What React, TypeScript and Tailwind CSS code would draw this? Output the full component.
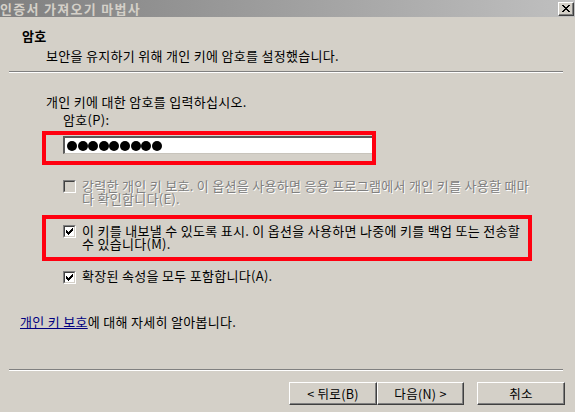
import React from 'react';
import clsx from 'clsx';

const font = { fontFamily: '"Noto Sans CJK KR", "Noto Sans", sans-serif' };

interface CheckProps {
  checked?: boolean;
  disabled?: boolean;
}

const Check: React.FC<CheckProps> = ({ checked, disabled }) => (
  <div className="w-[13px] h-[13px] shrink-0 border border-t-[#808080] border-l-[#808080] border-r-white border-b-white">
    <div
      className={clsx(
        'w-full h-full flex items-center justify-center border border-t-[#404040] border-l-[#404040] border-r-[#d4d0c8] border-b-[#d4d0c8]',
        disabled ? 'bg-[#d4d0c8]' : 'bg-white'
      )}
    >
      {checked && (
        <svg width="7" height="7" viewBox="0 0 7 7" shapeRendering="crispEdges">
          <path d="M6 0h1v3h-1z M5 1h1v3h-1z M4 2h1v3h-1z M3 3h1v3h-1z M2 4h1v3h-1z M1 3h1v3h-1z M0 2h1v3h-1z" fill="#000" />
        </svg>
      )}
    </div>
  </div>
);

const Button: React.FC<{ label: string; width: string }> = ({ label, width }) => (
  <div
    className={clsx(
      'h-[23px] flex items-center justify-center text-[12.5px] leading-[12px] tracking-[0.3px] text-black border border-t-white border-l-white border-r-[#404040] border-b-[#404040] shadow-[inset_-1px_-1px_0_#808080]',
      width
    )}
  >
    {label}
  </div>
);

export default function App() {
  return (
    <div className="w-[575px] h-[412px] bg-[#d4d0c8] overflow-hidden flex flex-col text-black text-[13px] tracking-[0.3px]" style={font}>
      {/* title bar */}
      <div className="h-[17px] shrink-0 flex items-center justify-between bg-linear-to-r from-[#808080] to-[#c0c0c0]">
        <span className="text-[13px] leading-[13px] font-bold text-[#d4d0c8] tracking-[1.3px]">인증서 가져오기 마법사</span>
        <div className="w-[16px] h-[14px] mr-[1px] bg-[#d4d0c8] border border-t-white border-l-white border-r-[#404040] border-b-[#404040] shadow-[inset_-1px_-1px_0_#808080] flex items-center justify-center">
          <svg width="8" height="7" viewBox="0 0 8 7" shapeRendering="crispEdges">
            <path d="M0 0h2l2 2.2 2-2.2h2l-3 3.5 3 3.5h-2l-2-2.2-2 2.2h-2l3-3.5z" fill="#000" />
          </svg>
        </div>
      </div>

      {/* header */}
      <div className="pl-[22px] pt-[13px] leading-[12px] font-bold">암호</div>
      <div className="pl-[46px] mt-[8px] leading-[12px]">보안을 유지하기 위해 개인 키에 암호를 설정했습니다.</div>
      <div className="ml-[9px] w-[554px] mt-[9px] border-t border-t-[#808080] border-b border-b-white" />

      {/* body */}
      <div className="pl-[46px] mt-[23px] leading-[12px]">개인 키에 대한 암호를 입력하십시오.</div>
      <div className="pl-[63px] mt-[6px] leading-[12px]">암호(P):</div>

      <div className="ml-[42px] mt-[5px] w-[334px] h-[34px] border-4 border-[#ff0010] pl-[17px] pt-[1px]">
        <div className="h-[18px] bg-white border-l-2 border-t-2 border-l-[#5a5a5a] border-t-[#5a5a5a] border-b border-b-[#c8c4bc] flex items-center pl-[2px] gap-[0.6px]">
          {Array.from({ length: 9 }).map((_, i) => (
            <div key={i} className="w-[10px] h-[10px] rounded-full bg-black" />
          ))}
        </div>
      </div>

      <div className="ml-[63px] mt-[14px] flex items-start gap-[6px]">
        <div className="mt-[1px]">
          <Check disabled />
        </div>
        <div className="leading-[13px] text-[#808080] [text-shadow:1px_1px_0_#fff] whitespace-nowrap">
          강력한 개인 키 보호. 이 옵션을 사용하면 응용 프로그램에서 개인 키를 사용할 때마
          <br />
          다 확인합니다(E).
        </div>
      </div>

      <div className="ml-[42px] mt-[10px] w-[490px] h-[46px] border-4 border-[#ff0010] pl-[17px] pt-[5px] flex items-start gap-[6px]">
        <div className="mt-[1px]">
          <Check checked />
        </div>
        <div className="leading-[13px] whitespace-nowrap">
          이 키를 내보낼 수 있도록 표시. 이 옵션을 사용하면 나중에 키를 백업 또는 전송할
          <br />
          수 있습니다(M).
        </div>
      </div>

      <div className="ml-[63px] mt-[8px] flex items-start gap-[6px]">
        <div className="mt-[2px]">
          <Check checked />
        </div>
        <div className="leading-[13px]">확장된 속성을 모두 포함합니다(A).</div>
      </div>

      <div className="pl-[20px] mt-[31px] leading-[13px]">
        <span className="text-[#000080] underline">개인 키 보호</span>에 대해 자세히 알아봅니다.
      </div>

      {/* footer */}
      <div className="mt-auto ml-[9px] w-[554px] border-t border-t-[#808080] border-b border-b-white" />
      <div className="mt-[11px] mb-[7px] pl-[289px] flex">
        <Button label="< 뒤로(B)" width="w-[88px]" />
        <Button label="다음(N) >" width="w-[87px]" />
        <div className="ml-[13px]">
          <Button label="취소" width="w-[88px]" />
        </div>
      </div>
    </div>
  );
}
